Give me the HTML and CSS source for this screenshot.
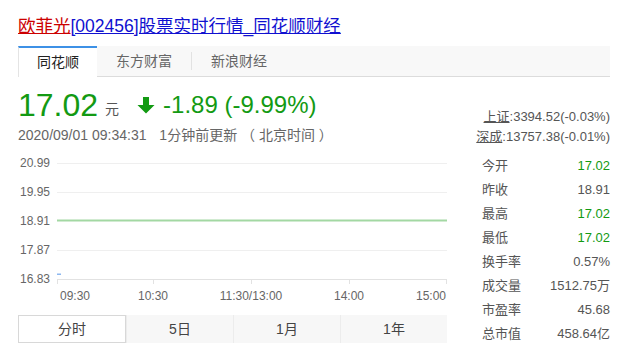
FILE: index.html
```html
<!DOCTYPE html>
<html lang="zh-CN">
<head>
    <meta charset="UTF-8">
    <title>欧菲光[002456]股票实时行情_同花顺财经</title>
    <link rel="stylesheet" href="styles.css">
</head>
<body>
    <div class="page">
        <h1 class="title"><a class="name" href="#">欧菲光</a><a href="#">[002456]股票实时行情_同花顺财经</a></h1>

        <div class="tabs">
            <div class="tab active">同花顺</div>
            <div class="tab">东方财富</div>
            <div class="tab sep">新浪财经</div>
        </div>

        <div class="main">
            <div class="quote">
                <div class="price-row">
                    <span class="price">17.02</span>
                    <span class="unit">元</span>
                    <svg class="arrow" width="18" height="18" viewBox="0 0 18 18">
                        <path d="M6 1h6v8h5.5L9 17.5 0.5 9H6z" fill="#139a13"/>
                    </svg>
                    <span class="change">-1.89 (-9.99%)</span>
                </div>
                <div class="time-row">
                    <span>2020/09/01 09:34:31</span>
                    <span class="updated">1分钟前更新 （ 北京时间 ）</span>
                </div>

                <svg class="chart" width="430" height="150" viewBox="0 0 430 150">
                    <g class="grid">
                        <line x1="39" y1="8.5" x2="429" y2="8.5"/>
                        <line x1="39" y1="37.5" x2="429" y2="37.5"/>
                        <line x1="39" y1="95.5" x2="429" y2="95.5"/>
                    </g>
                    <g class="axis">
                        <line x1="39" y1="124.5" x2="429" y2="124.5"/>
                        <line x1="39.5" y1="124" x2="39.5" y2="129"/>
                        <line x1="135.5" y1="124" x2="135.5" y2="129"/>
                        <line x1="233.5" y1="124" x2="233.5" y2="129"/>
                        <line x1="331.5" y1="124" x2="331.5" y2="129"/>
                        <line x1="428.5" y1="124" x2="428.5" y2="129"/>
                    </g>
                    <line class="base" x1="39" y1="65.5" x2="429" y2="65.5"/>
                    <rect class="tick" x="39" y="118.5" width="4" height="1.5"/>
                    <g class="ylabels">
                        <text x="32" y="12">20.99</text>
                        <text x="32" y="41">19.95</text>
                        <text x="32" y="70">18.91</text>
                        <text x="32" y="99">17.87</text>
                        <text x="32" y="128">16.83</text>
                    </g>
                    <g class="xlabels">
                        <text x="42" y="145">09:30</text>
                        <text x="135" y="145" text-anchor="middle">10:30</text>
                        <text x="233" y="145" text-anchor="middle">11:30/13:00</text>
                        <text x="331" y="145" text-anchor="middle">14:00</text>
                        <text x="428" y="145" text-anchor="end">15:00</text>
                    </g>
                </svg>

                <div class="periods">
                    <div class="period on">分时</div>
                    <div class="period">5日</div>
                    <div class="period">1月</div>
                    <div class="period">1年</div>
                </div>
            </div>

            <div class="side">
                <div class="index"><a href="#">上证</a>:3394.52(-0.03%)</div>
                <div class="index"><a href="#">深成</a>:13757.38(-0.01%)</div>
                <table class="stats">
                    <tr><td>今开</td><td class="up">17.02</td></tr>
                    <tr><td>昨收</td><td>18.91</td></tr>
                    <tr><td>最高</td><td class="up">17.02</td></tr>
                    <tr><td>最低</td><td class="up">17.02</td></tr>
                    <tr><td>换手率</td><td>0.57%</td></tr>
                    <tr><td>成交量</td><td>1512.75万</td></tr>
                    <tr><td>市盈率</td><td>45.68</td></tr>
                    <tr><td>总市值</td><td>458.64亿</td></tr>
                </table>
            </div>
        </div>
    </div>
</body>
</html>
```

FILE: styles.css
```css
body {
    margin: 0;
    background: #fff;
    font-family: "Liberation Sans", Arial, "Noto Sans CJK SC", sans-serif;
    color: #555;
}

.page {
    width: 592px;
    padding: 14px 0 0 18px;
}

.title {
    margin: 0;
    font-size: 17.5px;
    font-weight: normal;
    line-height: 25px;
    white-space: nowrap;
}

.title a {
    color: #1010d0;
    text-decoration: underline;
}

.title .name {
    color: #cc0000;
}

/* source tabs */
.tabs {
    display: flex;
    height: 30px;
    margin-top: 7px;
    background: #f8f8f8;
    border-bottom: 1px solid #dcdcdc;
}

.tab {
    padding: 0 19px;
    line-height: 30px;
    font-size: 14px;
    color: #666;
}

.tab.active {
    padding: 0 18px;
    background: #fff;
    color: #222;
    border-top: 2px solid #3d91e6;
    border-left: 1px solid #e4e4e4;
    line-height: 28px;
    height: 29px;
    margin-bottom: -1px;
}

.tab.sep {
    border-left: 1px solid #e2e2e2;
    margin-top: 6px;
    line-height: 18px;
    height: 18px;
}

/* main area */
.main {
    display: flex;
}

.quote {
    width: 429px;
}

.price-row {
    display: flex;
    align-items: center;
    height: 36px;
    margin-top: 10px;
    color: #139a13;
}

.price {
    font-size: 32px;
    line-height: 36px;
}

.unit {
    font-size: 14px;
    color: #555;
    margin: 6px 0 0 7px;
}

.arrow {
    margin: 0 8px 0 18px;
}

.change {
    font-size: 24px;
    line-height: 36px;
}

.time-row {
    margin-top: 2px;
    font-size: 14px;
    line-height: 20px;
    color: #666;
    white-space: nowrap;
}

.updated {
    margin-left: 9px;
}

.chart {
    display: block;
    margin-top: 10px;
}

.chart .grid line {
    stroke: #efefef;
    stroke-width: 1;
}

.chart .axis line {
    stroke: #e2e2e2;
    stroke-width: 1;
}

.chart .base {
    stroke: #a3d8a3;
    stroke-width: 2;
}

.chart .tick {
    fill: #8db8f0;
}

.chart text {
    font-family: "Liberation Sans", Arial, sans-serif;
    font-size: 12px;
    fill: #666;
}

.chart .ylabels text {
    text-anchor: end;
}

/* period switcher */
.periods {
    display: flex;
    height: 28px;
    margin-top: 10px;
    background: #f7f7f7;
}

.period {
    flex: 1;
    text-align: center;
    font-size: 14px;
    line-height: 28px;
    color: #444;
    border-left: 1px solid #ececec;
}

.period:first-child {
    border-left: none;
}

.period.on {
    background: #fff;
    border: 1px solid #d8d8d8;
    line-height: 26px;
}

/* right column */
.side {
    flex: 1;
    margin-left: 26px;
    padding-top: 30px;
    font-size: 13px;
    color: #555;
}

.index {
    text-align: right;
    line-height: 20px;
    white-space: nowrap;
}

.index a {
    color: #555;
    text-decoration: underline;
}

.stats {
    width: 100%;
    margin-top: 7px;
    border-collapse: collapse;
}

.stats td {
    height: 24px;
    padding: 0;
    line-height: 24px;
    font-size: 13px;
    white-space: nowrap;
}

.stats td:first-child {
    padding-left: 9px;
}

.stats td + td {
    text-align: right;
}

.stats .up {
    color: #139a13;
}
```
